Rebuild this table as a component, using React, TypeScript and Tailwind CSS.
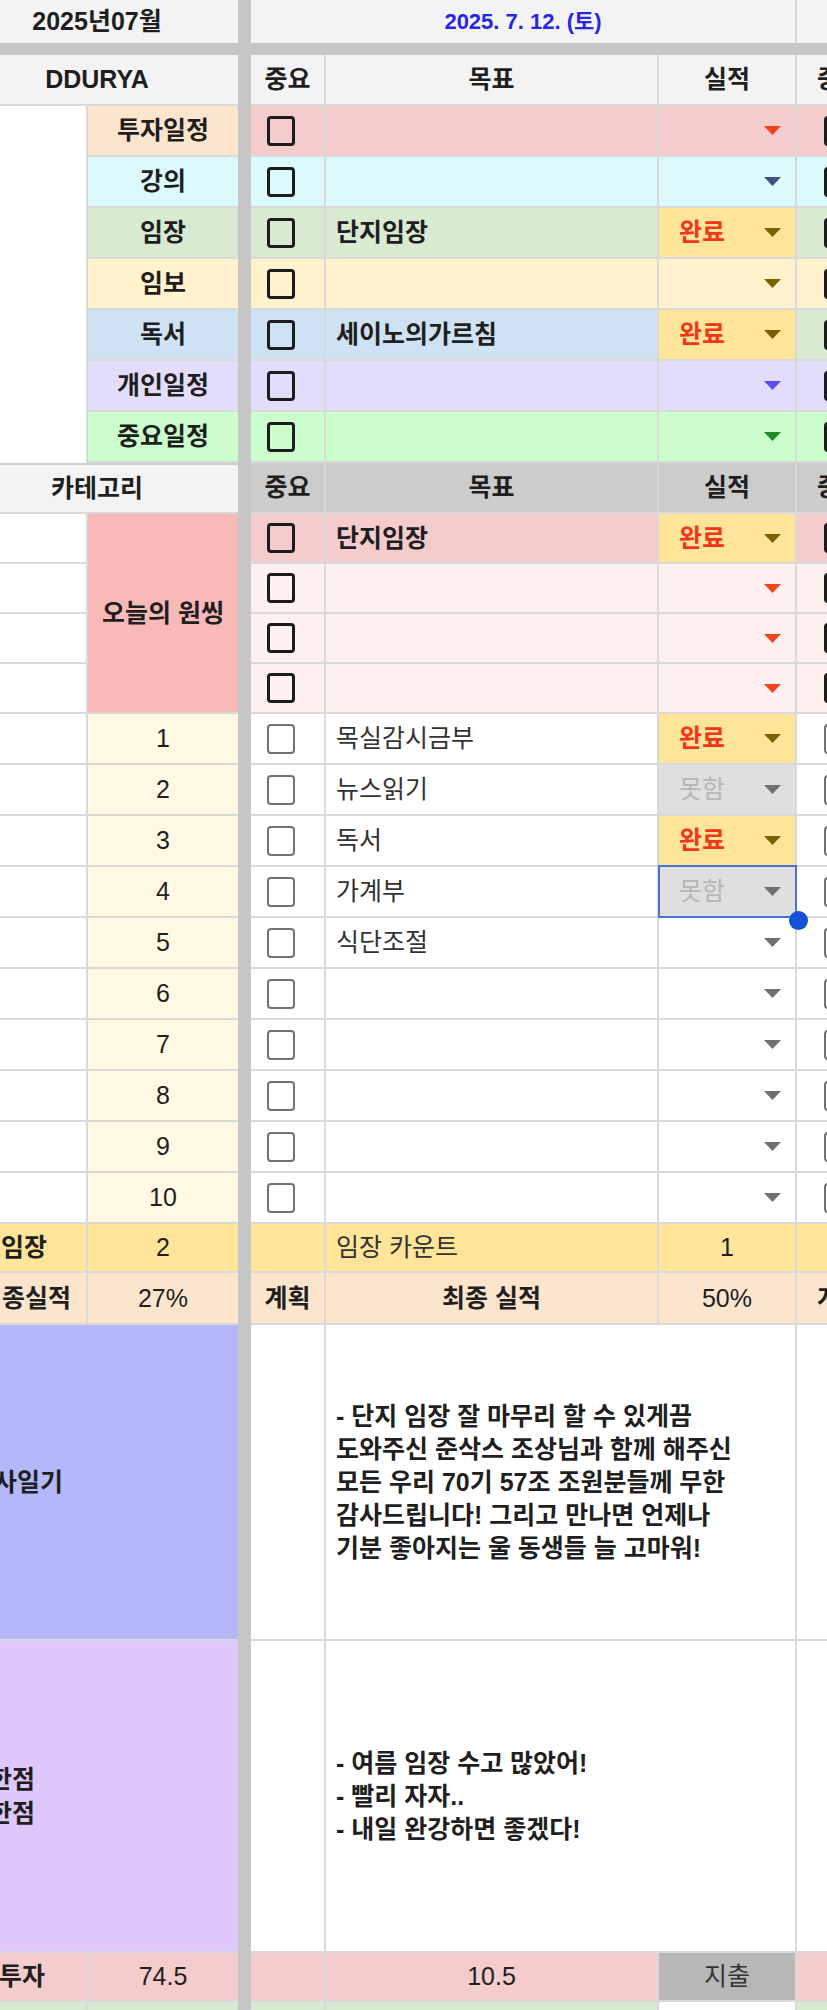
import React from 'react';

type Tone = 'red' | 'navy' | 'brown' | 'violet' | 'green' | 'gray';

const toneFill: Record<Tone, string> = {
  red: '#f2431f',
  navy: '#3f4f86',
  brown: '#7f6000',
  violet: '#5b4df2',
  green: '#1d8a24',
  gray: '#707070',
};

const Caret = ({ tone }: { tone: Tone }) => (
  <svg width="17" height="9" viewBox="0 0 17 9" className="shrink-0">
    <path d="M0 0h17L8.5 9z" fill={toneFill[tone]} />
  </svg>
);

// one sheet cell, gridlines on the right and bottom edge
const Cell = ({
  className = '',
  right = true,
  children,
}: {
  className?: string;
  right?: boolean;
  children?: React.ReactNode;
}) => (
  <div
    className={`flex items-center overflow-hidden border-b-2 border-[#d9d9d9] ${right ? 'border-r-2' : ''} ${className}`}
  >
    {children}
  </div>
);

const Sep = () => <div className="bg-[#c6c6c6]" />;

const Box = ({ light = false }: { light?: boolean }) =>
  light ? (
    <span className="block w-[28px] h-[30px] shrink-0 rounded-[4px] border-2 border-[#717171]" />
  ) : (
    <span className="block w-[28px] h-[30px] shrink-0 rounded-[4px] border-[3px] border-[#1c1c1c]" />
  );

type Kind = 'done' | 'miss' | 'none';

const Status = ({ kind, tone = 'gray', bg = 'bg-white' }: { kind: Kind; tone?: Tone; bg?: string }) => {
  if (kind === 'done')
    return (
      <Cell className="justify-between pl-[20px] pr-[14px] bg-[#ffe599]">
        <span className="font-bold text-[#f2361b]">완료</span>
        <Caret tone="brown" />
      </Cell>
    );
  if (kind === 'miss')
    return (
      <Cell className="justify-between pl-[20px] pr-[14px] bg-[#dfdfdf]">
        <span className="text-[#b6b6b6]">못함</span>
        <Caret tone="gray" />
      </Cell>
    );
  return (
    <Cell className={`justify-end pr-[14px] ${bg}`}>
      <Caret tone={tone} />
    </Cell>
  );
};

// the next day's column, cut off at the right edge
const Peek = ({ className = '', children }: { className?: string; children?: React.ReactNode }) => (
  <div className={`flex items-center overflow-hidden border-b-2 border-[#d9d9d9] ${className}`}>{children}</div>
);

const cats: { label: string; labelBg: string; bg: string; tone?: Tone; text?: string; done?: boolean }[] = [
  { label: '투자일정', labelBg: 'bg-[#fce5cd]', bg: 'bg-[#f4cccc]', tone: 'red' },
  { label: '강의', labelBg: 'bg-[#dcf9fd]', bg: 'bg-[#dcf9fd]', tone: 'navy' },
  { label: '임장', labelBg: 'bg-[#d9ead3]', bg: 'bg-[#d9ead3]', text: '단지임장', done: true },
  { label: '임보', labelBg: 'bg-[#fff2cc]', bg: 'bg-[#fff2cc]', tone: 'brown' },
  { label: '독서', labelBg: 'bg-[#cfe2f3]', bg: 'bg-[#cfe2f3]', text: '세이노의가르침', done: true },
  { label: '개인일정', labelBg: 'bg-[#e3ddfb]', bg: 'bg-[#e3ddfb]', tone: 'violet' },
  { label: '중요일정', labelBg: 'bg-[#ccfdcc]', bg: 'bg-[#ccfdcc]', tone: 'green' },
];

const oneThing: { bg: string; text?: string; done?: boolean }[] = [
  { bg: 'bg-[#f4cccc]', text: '단지임장', done: true },
  { bg: 'bg-[#fff0f0]' },
  { bg: 'bg-[#fff0f0]' },
  { bg: 'bg-[#fff0f0]' },
];

const tasks: { n: number; text?: string; kind: Kind }[] = [
  { n: 1, text: '목실감시금부', kind: 'done' },
  { n: 2, text: '뉴스읽기', kind: 'miss' },
  { n: 3, text: '독서', kind: 'done' },
  { n: 4, text: '가계부', kind: 'miss' },
  { n: 5, text: '식단조절', kind: 'none' },
  { n: 6, kind: 'none' },
  { n: 7, kind: 'none' },
  { n: 8, kind: 'none' },
  { n: 9, kind: 'none' },
  { n: 10, kind: 'none' },
];

const diary =
  '- 단지 임장 잘 마무리 할 수 있게끔\n도와주신 준삭스 조상님과 함께 해주신\n모든 우리 70기 57조 조원분들께 무한\n감사드립니다! 그리고 만나면 언제나\n기분 좋아지는 울 동생들 늘 고마워!';

const review = '- 여름 임장 수고 많았어!\n- 빨리 자자..\n- 내일 완강하면 좋겠다!';

const App: React.FC = () => {
  return (
    <div className="w-[827px] h-[2010px] overflow-hidden bg-white text-[25px] leading-none text-[#1f1f1f] font-['Liberation_Sans','Noto_Sans_CJK_KR',sans-serif]">
      <div className="grid grid-cols-[88px_150px_13px_75px_333px_138px_30px] grid-rows-[43px_12px_51px_repeat(7,51px)_51px_repeat(4,50px)_repeat(10,51px)_49px_52px_316px_312px_49px_51px]">
        {/* date row */}
        <div className="col-span-2 flex items-center justify-center pr-[44px] bg-[#f3f3f3] font-bold">2025년07월</div>
        <Sep />
        <div className="col-span-3 flex items-center justify-center bg-[#f3f3f3] border-r-2 border-[#d9d9d9] font-bold text-[22px] text-[#2626e4]">
          2025. 7. 12. (토)
        </div>
        <div className="bg-[#f3f3f3]" />

        {/* band */}
        <div className="col-span-7 bg-[#c6c6c6]" />

        {/* header */}
        <Cell right={false} className="col-span-2 justify-center pr-[44px] bg-[#f3f3f3] font-bold">
          DDURYA
        </Cell>
        <Sep />
        <Cell className="justify-center bg-[#f3f3f3] font-bold">중요</Cell>
        <Cell className="justify-center bg-[#f3f3f3] font-bold">목표</Cell>
        <Cell className="justify-center bg-[#f3f3f3] font-bold">실적</Cell>
        <Peek className="pl-[20px] bg-[#f3f3f3] font-bold">
          <span className="shrink-0">중요</span>
        </Peek>

        {/* categories */}
        {cats.map((c, i) => (
          <React.Fragment key={c.label}>
            {i === 0 && <div className="row-span-7 bg-white border-r-2 border-[#d9d9d9]" />}
            <Cell right={false} className={`justify-center font-bold ${c.labelBg}`}>
              {c.label}
            </Cell>
            <Sep />
            <Cell className={`pl-[16px] ${c.bg}`}>
              <Box />
            </Cell>
            <Cell className={`pl-[10px] font-bold ${c.bg}`}>{c.text}</Cell>
            <Status kind={c.done ? 'done' : 'none'} tone={c.tone} bg={c.bg} />
            <Peek className={`pl-[27px] ${c.done ? 'bg-[#d9ead3]' : c.bg}`}>
              <Box />
            </Peek>
          </React.Fragment>
        ))}

        {/* second header */}
        <Cell right={false} className="col-span-2 justify-center pr-[44px] bg-[#f3f3f3] font-bold border-t-2 border-t-[#cfcfcf]">
          카테고리
        </Cell>
        <Sep />
        <Cell className="justify-center bg-[#cccccc] font-bold">중요</Cell>
        <Cell className="justify-center bg-[#cccccc] font-bold">목표</Cell>
        <Cell className="justify-center bg-[#cccccc] font-bold">실적</Cell>
        <Peek className="pl-[20px] bg-[#cccccc] font-bold">
          <span className="shrink-0">중요</span>
        </Peek>

        {/* one thing of the day */}
        {oneThing.map((o, i) => (
          <React.Fragment key={`one-${i}`}>
            <Cell className="bg-white" />
            {i === 0 && (
              <Cell right={false} className="row-span-4 justify-center bg-[#f9b9b9] font-bold">
                오늘의 원씽
              </Cell>
            )}
            <Sep />
            <Cell className={`pl-[16px] ${o.bg}`}>
              <Box />
            </Cell>
            <Cell className={`pl-[10px] font-bold ${o.bg}`}>{o.text}</Cell>
            <Status kind={o.done ? 'done' : 'none'} tone="red" bg={o.bg} />
            <Peek className={`pl-[27px] ${o.bg}`}>
              <Box />
            </Peek>
          </React.Fragment>
        ))}

        {/* numbered tasks */}
        {tasks.map((t) => (
          <React.Fragment key={`task-${t.n}`}>
            <Cell className="bg-white" />
            <Cell right={false} className="justify-center bg-[#fff8e2]">
              {t.n}
            </Cell>
            <Sep />
            <Cell className="pl-[16px] bg-white">
              <Box light />
            </Cell>
            <Cell className="pl-[10px] bg-white text-[#333333]">{t.text}</Cell>
            {t.n === 4 ? (
              <div className="relative grid">
                <Status kind={t.kind} />
                <div className="absolute left-[-1px] top-[-2px] right-0 bottom-0 border-2 border-[#4a72d2]" />
                <div className="absolute right-[-11px] bottom-[-12px] z-10 w-[19px] h-[19px] rounded-full bg-[#1451d6]" />
              </div>
            ) : (
              <Status kind={t.kind} />
            )}
            <Peek className="pl-[27px] bg-white">
              <Box light />
            </Peek>
          </React.Fragment>
        ))}

        {/* site visit count */}
        <Cell className="justify-end pr-[39px] bg-[#ffe599] font-bold">
          <span className="shrink-0">임장</span>
        </Cell>
        <Cell right={false} className="justify-center bg-[#ffe599]">
          2
        </Cell>
        <Sep />
        <Cell className="bg-[#ffe599]" />
        <Cell className="pl-[10px] bg-[#ffe599] text-[#333333]">임장 카운트</Cell>
        <Cell className="justify-center bg-[#ffe599]">1</Cell>
        <Peek className="bg-[#ffe599]" />

        {/* final result */}
        <Cell className="justify-end pr-[15px] bg-[#fce5cd] font-bold">
          <span className="shrink-0">종실적</span>
        </Cell>
        <Cell right={false} className="justify-center bg-[#fce5cd]">
          27%
        </Cell>
        <Sep />
        <Cell className="justify-center bg-[#fce5cd] font-bold">
          <span className="shrink-0">계획</span>
        </Cell>
        <Cell className="justify-center bg-[#fce5cd] font-bold">최종 실적</Cell>
        <Cell className="justify-center bg-[#fce5cd]">50%</Cell>
        <Peek className="pl-[20px] bg-[#fce5cd] font-bold">
          <span className="shrink-0">계획</span>
        </Peek>

        {/* gratitude diary */}
        <Cell right={false} className="justify-end pr-[25px] bg-[#b4b8fa] font-bold">
          <span className="shrink-0">사일기</span>
        </Cell>
        <Cell right={false} className="bg-[#b4b8fa]" />
        <Sep />
        <Cell className="bg-white" />
        <Cell className="col-span-2 pl-[10px] bg-white font-bold">
          <p className="whitespace-pre leading-[33px]">{diary}</p>
        </Cell>
        <Peek className="bg-white" />

        {/* good / bad points */}
        <Cell right={false} className="justify-end pr-[53px] bg-[#dfc6fb] font-bold">
          <span className="shrink-0 w-max whitespace-pre text-right leading-[34px]">{'한점\n한점'}</span>
        </Cell>
        <Cell right={false} className="bg-[#dfc6fb]" />
        <Sep />
        <Cell className="bg-white" />
        <Cell className="col-span-2 pl-[10px] bg-white font-bold">
          <p className="whitespace-pre leading-[33px]">{review}</p>
        </Cell>
        <Peek className="bg-white" />

        {/* investment */}
        <Cell className="justify-end pr-[41px] bg-[#f4cccc] font-bold">
          <span className="shrink-0">투자</span>
        </Cell>
        <Cell right={false} className="justify-center bg-[#f4cccc]">
          74.5
        </Cell>
        <Sep />
        <Cell className="bg-[#f4cccc]" />
        <Cell className="justify-center bg-[#f4cccc]">10.5</Cell>
        <Cell className="justify-center bg-[#b7b7b7] text-[#333333]">지출</Cell>
        <Peek className="bg-[#f4cccc]" />

        {/* next row, cut off */}
        <Cell className="bg-[#d9ead3]" />
        <Cell right={false} className="bg-[#d9ead3]" />
        <Sep />
        <Cell className="bg-[#d9ead3]" />
        <Cell className="bg-[#d9ead3]" />
        <Cell className="bg-white" />
        <Peek className="bg-[#d9ead3]" />
      </div>
    </div>
  );
};

export default App;
